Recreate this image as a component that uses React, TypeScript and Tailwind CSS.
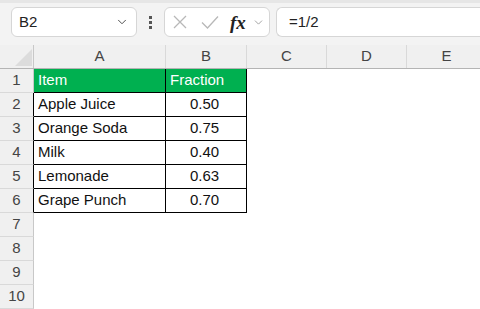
import { ChevronDown } from "lucide-react";

const cols = ["A", "B", "C", "D", "E"];
const colWidths = ["w-[132px]", "w-[81px]", "w-[80px]", "w-[80px]", "w-[80px]"];

const data = [
  { item: "Apple Juice", value: "0.50" },
  { item: "Orange Soda", value: "0.75" },
  { item: "Milk", value: "0.40" },
  { item: "Lemonade", value: "0.63" },
  { item: "Grape Punch", value: "0.70" },
];

function RowHead({ n, dark }: { n: number; dark?: boolean }) {
  return (
    <div
      className={`w-[34px] h-full shrink-0 flex items-center justify-center bg-[#f0f0f0] border-b border-b-[#d9d9d9] border-r text-[#444] ${
        dark ? "border-r-black" : "border-r-[#c8c8c8]"
      }`}
    >
      {n}
    </div>
  );
}

function EmptyCells({ from }: { from: number }) {
  return (
    <>
      {colWidths.slice(from).map((w, i) => (
        <div key={i} className={`${w} h-full shrink-0 bg-white`} />
      ))}
    </>
  );
}

export default function App() {
  return (
    <div className="w-[480px] h-[309px] overflow-hidden bg-white font-['Liberation_Sans',Arial,sans-serif] text-[15px] text-[#111]">
      {/* formula bar */}
      <div className="h-[45px] bg-[#f3f3f3] border-t-[3px] border-t-[#e6e6e6] flex items-start pt-[4px] pl-[11px]">
        <div className="w-[126px] h-[30px] bg-white border border-[#d6d6d6] rounded-[6px] flex items-center pl-[7px] pr-[7px]">
          <span className="flex-1 text-[#222]">B2</span>
          <ChevronDown size={14} strokeWidth={1.6} className="text-[#444]" />
        </div>
        <div className="w-[27px] h-[30px] flex flex-col items-center justify-center gap-[2px]">
          <span className="w-[3px] h-[3px] bg-[#555]" />
          <span className="w-[3px] h-[3px] bg-[#555]" />
          <span className="w-[3px] h-[3px] bg-[#555]" />
        </div>
        <div className="w-[106px] h-[30px] bg-white border border-[#d6d6d6] rounded-[6px] flex items-center pl-[7px]">
          <svg width="16" height="16" viewBox="0 0 16 16" className="shrink-0">
            <path d="M2 2 L14 14 M14 2 L2 14" stroke="#b8b8b8" strokeWidth="1.3" fill="none" />
          </svg>
          <svg width="20" height="16" viewBox="0 0 20 16" className="ml-[12px] shrink-0">
            <path d="M2 8.5 L7.5 14 L18 2.5" stroke="#b8b8b8" strokeWidth="1.3" fill="none" />
          </svg>
          <span className="ml-[10px] font-['Liberation_Serif',serif] italic font-semibold text-[19px] leading-none text-[#222]">
            fx
          </span>
          <ChevronDown size={13} strokeWidth={1.4} className="ml-[6px] text-[#888]" />
        </div>
        <div className="ml-[6px] flex-1 h-[30px] bg-white border border-[#d6d6d6] rounded-l-[6px] border-r-0 flex items-center pl-[12px] text-[#222]">
          =1/2
        </div>
      </div>

      {/* column headers */}
      <div className="h-[24px] flex bg-[#f0f0f0] border-b border-b-[#b4b4b4] text-[#444]">
        <div className="w-[34px] h-full shrink-0 border-r border-r-[#c8c8c8] flex items-end justify-end pr-[1px] pb-[2px]">
          <svg width="17" height="17" viewBox="0 0 17 17">
            <path d="M17 0 L17 17 L0 17 Z" fill="#dcdcdc" />
          </svg>
        </div>
        {cols.map((c, i) => (
          <div
            key={c}
            className={`${colWidths[i]} h-full shrink-0 border-r border-r-[#d9d9d9] flex items-center justify-center`}
          >
            {c}
          </div>
        ))}
      </div>

      {/* row 1 */}
      <div className="h-[24px] flex">
        <RowHead n={1} />
        <div className="w-[132px] h-full shrink-0 bg-[#00b050] text-white border-r border-r-black border-b border-b-black flex items-center pl-[4px]">
          Item
        </div>
        <div className="w-[81px] h-full shrink-0 bg-[#00b050] text-white border-r border-r-black border-b border-b-black flex items-center pl-[4px]">
          Fraction
        </div>
        <EmptyCells from={2} />
      </div>

      {data.map((r, i) => (
        <div key={r.item} className="h-[24px] flex">
          <RowHead n={i + 2} dark />
          <div className="w-[132px] h-full shrink-0 border-r border-r-black border-b border-b-black flex items-center pl-[4px]">
            {r.item}
          </div>
          <div className="w-[81px] h-full shrink-0 border-r border-r-black border-b border-b-black flex items-center justify-center pr-[3px]">
            {r.value}
          </div>
          <EmptyCells from={2} />
        </div>
      ))}

      {[7, 8, 9, 10].map((n) => (
        <div key={n} className="h-[24px] flex">
          <RowHead n={n} />
          <EmptyCells from={0} />
        </div>
      ))}
    </div>
  );
}
